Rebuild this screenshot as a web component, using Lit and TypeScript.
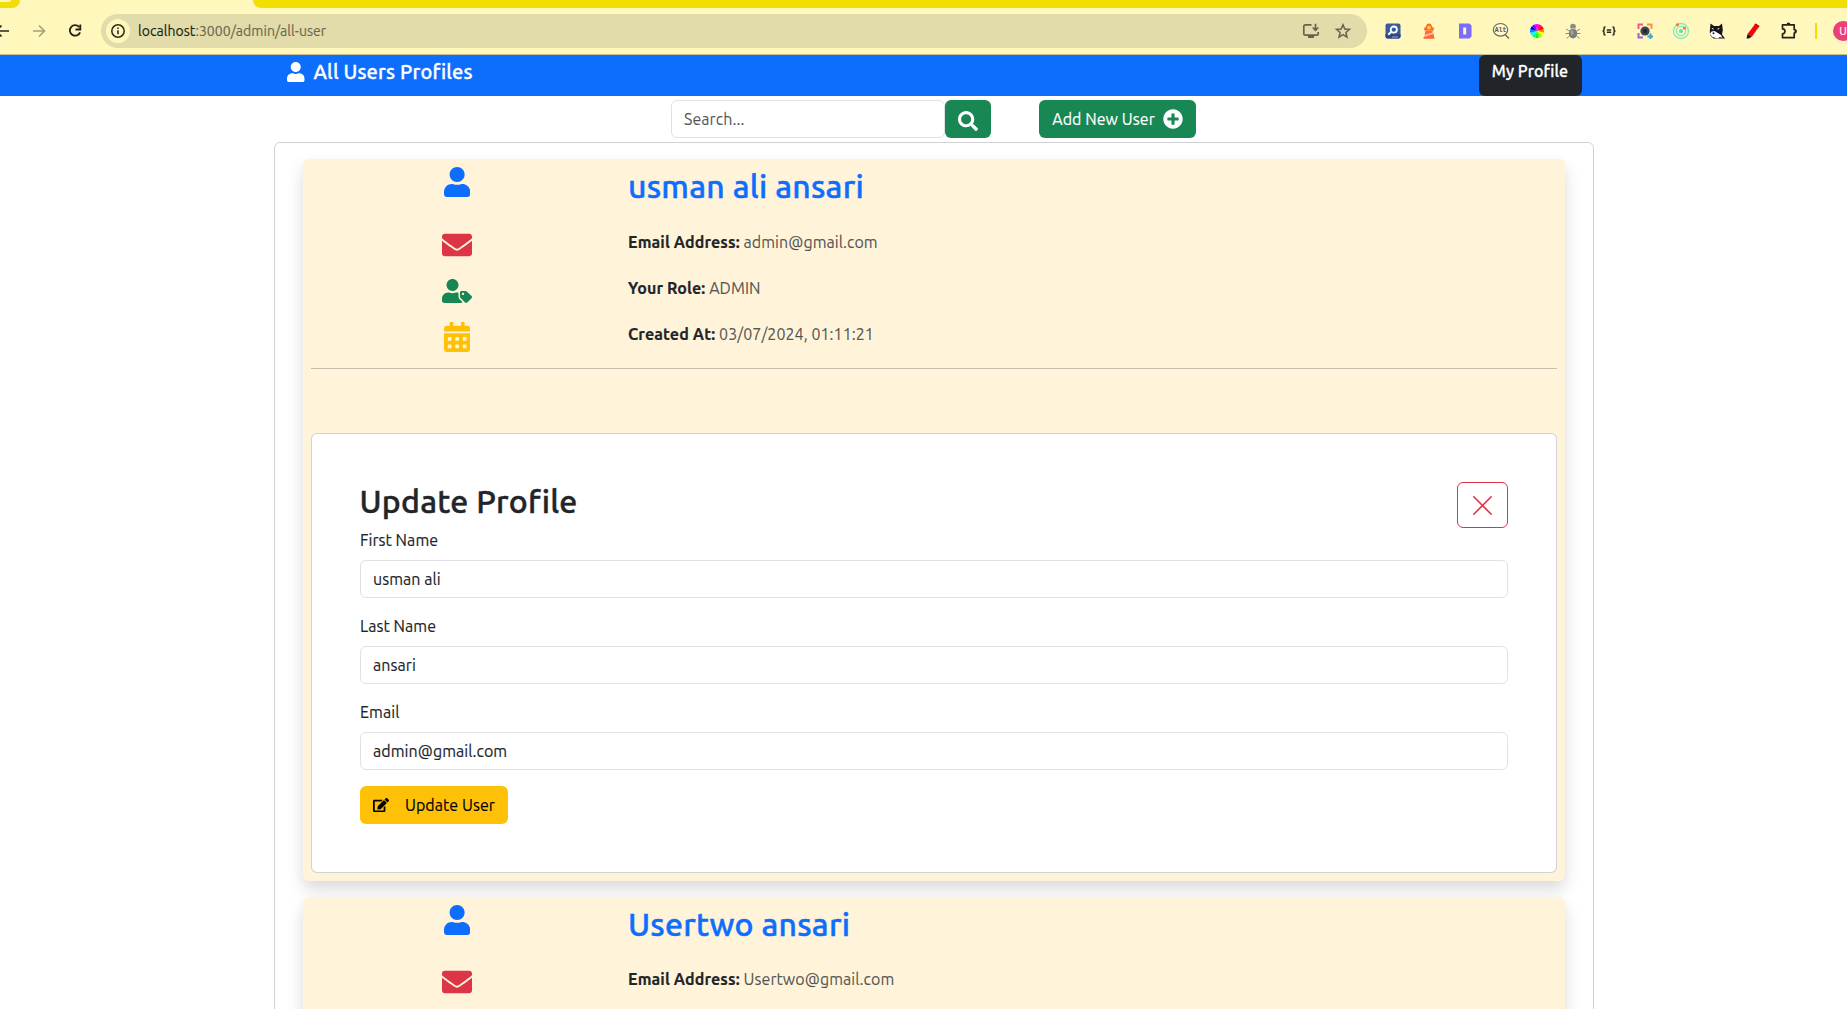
import { LitElement, html, css, svg, nothing } from "lit";
import { customElement, property } from "lit/decorators.js";

const ICONS: Record<string, { w: number; h: number; d: string }> = {
  user: { w: 448, h: 512, d: "M224 256c70.7 0 128-57.3 128-128S294.7 0 224 0 96 57.3 96 128s57.3 128 128 128zm89.6 32h-16.7c-22.2 10.2-46.9 16-72.9 16s-50.6-5.8-72.9-16h-16.7C60.2 288 0 348.2 0 422.4V464c0 26.5 21.5 48 48 48h352c26.5 0 48-21.5 48-48v-41.6c0-74.2-60.2-134.4-134.4-134.4z" },
  envelope: { w: 512, h: 512, d: "M502.3 190.8c3.9-3.1 9.7-.2 9.7 4.7V400c0 26.5-21.5 48-48 48H48c-26.5 0-48-21.5-48-48V195.6c0-5 5.7-7.8 9.7-4.7 22.4 17.4 52.1 39.5 154.1 113.6 21.1 15.4 56.7 47.8 92.2 47.6 35.7.3 72-32.8 92.3-47.6 102-74.1 131.6-96.3 154-113.7zM256 320c23.2.4 56.6-29.2 73.4-41.4 132.7-96.3 142.8-104.7 173.4-128.7 5.8-4.5 9.2-11.5 9.2-18.9v-19c0-26.5-21.5-48-48-48H48c-26.5 0-48 21.5-48 48v19c0 7.4 3.4 14.3 9.2 18.9 30.6 23.9 40.7 32.4 173.4 128.7 16.8 12.2 50.2 41.8 73.4 41.4z" },
  userTag: { w: 640, h: 512, d: "M630.6 364.9l-90.3-90.2c-12-12-28.3-18.7-45.3-18.7h-79.3c-17.7 0-32 14.3-32 32v79.2c0 17 6.7 33.2 18.7 45.2l90.3 90.2c12.5 12.5 32.8 12.5 45.3 0l92.5-92.5c12.6-12.5 12.6-32.7.1-45.2zm-182.8-21c-13.3 0-24-10.7-24-24s10.7-24 24-24 24 10.7 24 24c0 13.2-10.7 24-24 24zm-223.8-88c70.7 0 128-57.3 128-128C352 57.3 294.7 0 224 0S96 57.3 96 128c0 70.6 57.3 127.9 128 127.9zm127.8 111.2V294c-12.2-3.6-24.9-6.2-38.2-6.2h-16.7c-22.2 10.2-46.9 16-72.9 16s-50.6-5.8-72.9-16h-16.7C60.2 287.9 0 348.1 0 422.3v41.6c0 26.5 21.5 48 48 48h352c15.5 0 29.1-7.5 37.9-18.9l-58-58c-18.1-18.1-28.1-42.2-28.1-67.9z" },
  calendar: { w: 448, h: 512, d: "M0 464c0 26.5 21.5 48 48 48h352c26.5 0 48-21.5 48-48V192H0v272zm320-196c0-6.6 5.4-12 12-12h40c6.6 0 12 5.4 12 12v40c0 6.6-5.4 12-12 12h-40c-6.6 0-12-5.4-12-12v-40zm0 128c0-6.6 5.4-12 12-12h40c6.6 0 12 5.4 12 12v40c0 6.6-5.4 12-12 12h-40c-6.6 0-12-5.4-12-12v-40zM192 268c0-6.6 5.4-12 12-12h40c6.6 0 12 5.4 12 12v40c0 6.6-5.4 12-12 12h-40c-6.6 0-12-5.4-12-12v-40zm0 128c0-6.6 5.4-12 12-12h40c6.6 0 12 5.4 12 12v40c0 6.6-5.4 12-12 12h-40c-6.6 0-12-5.4-12-12v-40zM64 268c0-6.6 5.4-12 12-12h40c6.6 0 12 5.4 12 12v40c0 6.6-5.4 12-12 12H76c-6.6 0-12-5.4-12-12v-40zm0 128c0-6.6 5.4-12 12-12h40c6.6 0 12 5.4 12 12v40c0 6.6-5.4 12-12 12H76c-6.6 0-12-5.4-12-12v-40zM400 64h-48V16c0-8.8-7.2-16-16-16h-32c-8.8 0-16 7.2-16 16v48H160V16c0-8.8-7.2-16-16-16h-32c-8.8 0-16 7.2-16 16v48H48C21.5 64 0 85.5 0 112v48h448v-48c0-26.5-21.5-48-48-48z" },
  plus: { w: 512, h: 512, d: "M256 8C119 8 8 119 8 256s111 248 248 248 248-111 248-248S393 8 256 8zm144 276c0 6.6-5.4 12-12 12h-92v92c0 6.6-5.4 12-12 12h-56c-6.6 0-12-5.4-12-12v-92h-92c-6.6 0-12-5.4-12-12v-56c0-6.6 5.4-12 12-12h92v-92c0-6.6 5.4-12 12-12h56c6.6 0 12 5.4 12 12v92h92c6.6 0 12 5.4 12 12v56z" },
  search: { w: 512, h: 512, d: "M505 442.7L405.3 343c-4.5-4.5-10.6-7-17-7H372c27.6-35.3 44-79.7 44-128C416 93.1 322.9 0 208 0S0 93.1 0 208s93.1 208 208 208c48.3 0 92.7-16.4 128-44v16.3c0 6.4 2.5 12.5 7 17l99.7 99.7c9.4 9.4 24.6 9.4 33.9 0l28.3-28.3c9.4-9.4 9.4-24.6.1-34zM208 336c-70.7 0-128-57.2-128-128 0-70.7 57.2-128 128-128 70.7 0 128 57.2 128 128 0 70.7-57.2 128-128 128z" },
  edit: { w: 576, h: 512, d: "M402.6 83.2l90.2 90.2c3.8 3.8 3.8 10 0 13.8L274.4 405.6l-92.8 10.3c-12.4 1.4-22.9-9.1-21.5-21.5l10.3-92.8L388.8 83.2c3.8-3.8 10-3.8 13.8 0zm162-22.9l-48.8-48.8c-15.2-15.2-39.9-15.2-55.2 0l-35.4 35.4c-3.8 3.8-3.8 10 0 13.8l90.2 90.2c3.8 3.8 10 3.8 13.8 0l35.4-35.4c15.2-15.3 15.2-40 0-55.2zM384 346.2V448H64V128h229.8c3.2 0 6.2-1.3 8.5-3.5l40-40c7.6-7.6 2.2-20.5-8.5-20.5H48C21.5 64 0 85.5 0 112v352c0 26.5 21.5 48 48 48h352c26.5 0 48-21.5 48-48V306.2c0-10.7-12.9-16-20.5-8.5l-40 40c-2.2 2.3-3.5 5.3-3.5 8.5z" },
};

const icon = (name: string, w: number, h: number) => {
  const i = ICONS[name];
  return html`<svg width=${w} height=${h} viewBox="0 0 ${i.w} ${i.h}" fill="currentColor"><path d=${i.d}></path></svg>`;
};

const sector = (k: number) => {
  const a = ((k * 30 - 105) * Math.PI) / 180;
  const b = ((k * 30 - 75) * Math.PI) / 180;
  const p = (t: number) => `${(8 + 7 * Math.cos(t)).toFixed(2)} ${(8 + 7 * Math.sin(t)).toFixed(2)}`;
  return svg`<path d="M8 8L${p(a)}A7 7 0 0 1 ${p(b)}z" fill="hsl(${300 + k * 30} 100% 50%)"></path>`;
};

const EXTENSIONS = [
  svg`<rect x=".5" y=".5" width="15" height="15" rx="2" fill="#3a5a9e"></rect><path d="M.5 11h15v2.5a2 2 0 0 1-2 2h-11a2 2 0 0 1-2-2z" fill="#2d4682"></path><circle cx="8.8" cy="6.6" r="3.1" fill="none" stroke="#fff" stroke-width="1.8"></circle><path d="M6.4 8.8L3.2 11.8" stroke="#fff" stroke-width="2"></path><path d="M7 14h6" stroke="#8fa6d6"></path>`,
  svg`<path d="M4.6 4.5C5 2 6.400.4 8 .4S11 2 11.400 4.500h1.400v3H3.200v-3z" fill="#ff6633"></path><circle cx="8" cy="4.600" r="1.900" fill="#ffd21e"></circle><path d="M4.500 7.500h7l.400 2L3.500 12z" fill="#ff6a3c"></path><path d="M3.500 12l8.600-2.800.4 2.400L2.600 15z" fill="#ffb59b"></path><path d="M2.400 15.800l.3-1.600 9.900-3.200.9 4.800z" fill="#ff6633"></path>`,
  svg`<path fill-rule="evenodd" d="M2 .5h10.500l2 2v11l-2 2H2zM6.200 4.500v7h3v-7z" fill="#7a6cff"></path>`,
  svg`<ellipse cx="7.500" cy="6.800" rx="7.200" ry="6.300" fill="#fdf8d2" stroke="#6b6950" stroke-width="1.200"></ellipse><path d="M12 11.500l4 4" stroke="#6b6950" stroke-width="1.500"></path><text x="7.500" y="9.200" text-anchor="middle" font-family="Liberation Mono, monospace" font-size="6.500" font-weight="700" fill="#55533e">Alt</text>`,
  svg`${Array.from({ length: 12 }, (_, k) => sector(k))}`,
  svg`<g fill="none" stroke="#8b8b80" stroke-width="1"><path d="M4.500 8L1 6M4 10.500H.5M4.500 13L1.500 15.500M11.500 8L15 6M12 10.500h3.500M11.500 13l3 2.500"></path></g><ellipse cx="8" cy="10.500" rx="4.200" ry="5" fill="#7c7c78"></ellipse><circle cx="8" cy="3.600" r="2.800" fill="#8a8a86"></circle><path d="M5.500 5.700h5" stroke="#c8c6a8"></path><ellipse cx="7" cy="9.500" rx="1.500" ry="2.500" fill="#a3a3a0"></ellipse>`,
  svg`<g fill="none" stroke="#2a2a22" stroke-width="1.500"><path d="M4.500 4H4Q3 4 3 5v1.700Q3 8 1.500 8 3 8 3 9.300V11q0 1 1 1h.5M11.500 4h.5q1 0 1 1v1.700Q13 8 14.500 8 13 8 13 9.300V11q0 1-1 1h-.5"></path><path d="M5.800 7h4.400M5.800 9.300h4.400"></path></g>`,
  svg`<g fill="none" stroke-width="2"><path d="M1.500 6V1.500H6" stroke="#f0568a"></path><path d="M10 1.500h4.500V6" stroke="#f79342"></path><path d="M1.500 10v4.500H6" stroke="#9b62d6"></path><path d="M13.500 10.500v5.500M10.500 13.500h5.500" stroke="#38a7d0"></path></g><circle cx="8" cy="8" r="4.600" fill="#3c4654"></circle><circle cx="8" cy="8" r="2" fill="#1d2530"></circle>`,
  svg`<g fill="none" stroke="#7fecc0" stroke-width="1.300"><circle cx="8" cy="8" r="7.500"></circle><circle cx="8" cy="8" r="4.700"></circle></g><circle cx="8" cy="8" r="2" fill="#5fe0b4"></circle><circle cx="4.500" cy="1.700" r="1.500" fill="#ff6a3d"></circle><circle cx="11.500" cy="5" r="1.600" fill="#ff6a3d"></circle>`,
  svg`<path d="M1.500.5L5 3h5l3-2.500.8 6.500-.8 4.500 3 4H4.500L1 12 .8 8z" fill="#15151a"></path><path d="M5.500 8L2.500 8.500.8 11l2.700 3 5 1.500 2.500-1.500 2.500 1-1.500-3-4-2.500z" fill="#fff"></path><path d="M2.800 5.500l1.700.6M8.500 6.200l1.800-.8" stroke="#fff"></path><circle cx="4.500" cy="10.300" r="1" fill="#222"></circle>`,
  svg`<path d="M10.500.5l4 2.500L7 13.500 2.500 11z" fill="#f00808"></path><path d="M10.500.5l4 2.500-1.200 1.600-4-2.600z" fill="#e00000"></path><path d="M2.500 11L7 13.500 4 15.500H1.500z" fill="#30130a"></path>`,
  svg`<path d="M1.500 1.800h11.700v4.700a1.800 1.800 0 0 1 0 3.600v4.600H1.500v-3.900a2.500 2.500 0 0 0 0-5z" fill="none" stroke="#23231b" stroke-width="1.700" stroke-linejoin="round"></path><path d="M5.500 1.500a1.900 1.900 0 0 1 3.800 0zM13.500 6.400a1.900 1.900 0 0 1 0 3.800z" fill="#23231b"></path>`,
];

@customElement("browser-bar")
class BrowserBar extends LitElement {
  static styles = css`
    :host { display: block; height: 55px; box-sizing: border-box; overflow: hidden; background: #fff7bb; border-bottom: 1px solid #c6c194; font-family: Ubuntu, "Noto Sans", sans-serif; }
    svg { display: block; flex: none; overflow: visible; }
    .tabs { display: flex; justify-content: space-between; height: 8px; }
    .tab-left { width: 20px; background: #f2de00; border-bottom-right-radius: 8px; }
    .tab-pill { width: 11px; height: 2px; background: #fff7bb; border-bottom-right-radius: 6px; }
    .tab-right { width: 1594px; background: #f2de00; border-bottom-left-radius: 8px; }
    .bar { display: flex; align-items: center; height: 46px; }
    .nav { display: flex; flex: none; align-items: center; gap: 19px; width: 101px; }
    .back { margin-left: -7px; }
    .omnibox { display: flex; flex: none; align-items: center; box-sizing: border-box; width: 1266px; height: 34px; padding: 0 16px 0 5px; border-radius: 17px; background: #e1dca9; }
    .info { display: flex; align-items: center; justify-content: center; width: 24px; height: 24px; margin-right: 8px; border-radius: 50%; background: #fff7bb; }
    .url { flex: 1; font-size: 14px; line-height: 20px; letter-spacing: 0.05px; color: #6a6751; white-space: nowrap; }
    .host { color: #1f1f1a; }
    .actions { display: flex; gap: 16px; }
    .extensions { display: flex; flex: none; gap: 20px; margin-left: 18px; }
    .divider { flex: none; width: 2px; height: 16px; margin-left: 18px; background: #f2de00; }
    .avatar { flex: none; width: 20px; height: 20px; margin-left: 16px; border-radius: 50%; background: #ec407a; color: #fff; font-size: 11px; line-height: 20px; text-align: center; }
  `;
  render() {
    return html`
      <div class="tabs"><div class="tab-left"><div class="tab-pill"></div></div><div class="tab-right"></div></div>
      <div class="bar">
        <div class="nav">
          <svg class="back" width="16" height="16" viewBox="0 0 16 16" fill="none" stroke="#2a2a22" stroke-width="1.700"><path d="M16 8H3M8.500 2.500L3 8l5.500 5.500"></path></svg>
          <svg width="20" height="16" viewBox="0 0 20 16" fill="none" stroke="#a5a07a" stroke-width="1.600"><path d="M5 8h11M11 2.500L16.500 8 11 13.500"></path></svg>
          <svg width="16" height="16" viewBox="0 0 16 16" fill="none" stroke="#23231b" stroke-width="1.800"><path d="M12.400 4.200A5.300 5.300 0 1 0 13.100 9.300"></path><path d="M13.300 1.500v5H8.500"></path></svg>
        </div>
        <div class="omnibox">
          <div class="info"><svg width="16" height="16" viewBox="0 0 16 16"><circle cx="8" cy="8" r="6.200" fill="none" stroke="#2a2a22" stroke-width="1.500"></circle><path d="M8 7.200v4M8 4.500v1.500" stroke="#2a2a22" stroke-width="1.600"></path></svg></div>
          <div class="url"><span class="host">localhost</span>:3000/admin/all-user</div>
          <div class="actions">
            <svg width="16" height="16" viewBox="0 0 16 16" fill="none" stroke="#66634c" stroke-width="1.700"><path d="M8.500 1.800H2.300a1.500 1.500 0 0 0-1.500 1.500v7.400a1.500 1.500 0 0 0 1.500 1.500h11.400a1.500 1.500 0 0 0 1.500-1.500V9M12.500.8v6M9.700 4.500l2.800 2.800 2.800-2.800"></path><path d="M5 14h6" stroke-width="2"></path></svg>
            <svg width="16" height="16" viewBox="0 0 16 16" fill="none" stroke="#66634c" stroke-width="1.500"><path d="M8 1.700l1.800 4.300 4.700.4-3.600 3.100 1.100 4.600L8 11.600l-4 2.500 1.100-4.600-3.600-3.100 4.700-.4z"></path></svg>
          </div>
        </div>
        <div class="extensions">${EXTENSIONS.map((e) => html`<svg width="16" height="16" viewBox="0 0 16 16">${e}</svg>`)}</div>
        <div class="divider"></div>
        <div class="avatar">U</div>
      </div>`;
  }
}

interface User { first: string; last: string; email: string; role?: string; created?: string; }

@customElement("user-card")
class UserCard extends LitElement {
  @property({ attribute: false }) user!: User;
  @property({ type: Boolean }) editing = false;
  static styles = css`
    :host { display: block; box-sizing: border-box; padding: 8px; border-radius: 6px; background: #fff3da; box-shadow: 0 8px 16px rgba(0, 0, 0, 0.15); }
    svg { display: block; }
    h2 { margin: 0; font-size: 32px; line-height: 38.4px; font-weight: 500; letter-spacing: 0.23px; -webkit-text-stroke: 0.45px currentColor; }
    .info { display: grid; grid-template-columns: 292px 1fr; column-gap: 25px; grid-template-rows: 62.600px 46px 46px 46px; }
    .icon { display: flex; justify-content: center; align-items: center; height: 30px; }
    .blue { color: #0d6efd; }
    .red { color: #dc3545; }
    .green { color: #198754; }
    .yellow { color: #ffc107; }
    .line { color: rgba(33, 37, 41, 0.75); }
    b { color: #212529; font-weight: 700; letter-spacing: 0.12px; }
    hr { height: 1px; margin: 0 0 64px; border: 0; background: rgba(33, 37, 41, 0.25); }
    .panel { padding: 48px; border: 1px solid rgba(0, 0, 0, 0.175); border-radius: 6px; background: #fff; }
    .head { display: flex; justify-content: space-between; align-items: flex-start; height: 46px; }
    .head h2 { margin-left: -0.5px; }
    .close { display: flex; align-items: center; justify-content: center; box-sizing: border-box; width: 51px; height: 46px; padding-top: 1px; border: 1px solid #dc3545; border-radius: 6px; }
    label { display: block; margin-bottom: 8px; }
    input { display: block; box-sizing: border-box; width: 100%; height: 38px; margin: 0 0 16px; padding: 6px 12px; border: 1px solid #dee2e6; border-radius: 6px; background: #fff; color: #212529; font: inherit; letter-spacing: inherit; -webkit-text-stroke: inherit; }
    .update { display: flex; align-items: center; box-sizing: border-box; width: 148px; height: 38px; padding: 0 13px; gap: 16px; border-radius: 6px; background: #ffc107; color: #000; white-space: nowrap; }
  `;
  private field(label: string, value: string) {
    return html`<label>${label}</label><input .value=${value} />`;
  }
  render() {
    const u = this.user;
    return html`
      <div class="info">
        <div class="icon blue">${icon("user", 26.25, 30)}</div><h2 class="blue">${u.first} ${u.last}</h2>
        <div class="icon red">${icon("envelope", 30, 30)}</div><div class="line"><b>Email Address:</b> ${u.email}</div>
        ${u.role ? html`<div class="icon green">${icon("userTag", 30, 24)}</div><div class="line"><b>Your Role:</b> ${u.role}</div>` : nothing}
        ${u.created ? html`<div class="icon yellow">${icon("calendar", 26.25, 30)}</div><div class="line"><b>Created At:</b> ${u.created}</div>` : nothing}
      </div>
      <hr />
      ${this.editing
        ? html`<div class="panel">
            <div class="head">
              <h2>Update Profile</h2>
              <div class="close"><svg width="25" height="25" viewBox="0 0 25 25" fill="none" stroke="#dc3545" stroke-width="1.600" stroke-linecap="round"><path d="M3.800 3.800l17.400 17.400M21.200 3.800L3.800 21.200"></path></svg></div>
            </div>
            ${this.field("First Name", u.first)}${this.field("Last Name", u.last)}${this.field("Email", u.email)}
            <div class="update">${icon("edit", 16, 14.2)}<span>Update User</span></div>
          </div>`
        : nothing}`;
  }
}

const USERS: User[] = [
  { first: "usman ali", last: "ansari", email: "admin@gmail.com", role: "ADMIN", created: "03/07/2024, 01:11:21" },
  { first: "Usertwo", last: "ansari", email: "Usertwo@gmail.com" },
];

@customElement("app-root")
class AppRoot extends LitElement {
  static styles = css`
    :host { display: flex; flex-direction: column; height: 1009px; overflow: hidden; background: #fff; color: #212529; font: 400 16px/24px Ubuntu, "Noto Sans", sans-serif; letter-spacing: 0.06px; -webkit-text-stroke: 0.15px currentColor; }
    svg { display: block; flex: none; }
    browser-bar, .navbar, .tools { flex: none; }
    browser-bar { letter-spacing: 0; }
    .navbar { display: flex; justify-content: space-between; box-sizing: border-box; height: 41px; padding: 0 265px 0 287px; background: #0d6efd; color: #fff; font-weight: 500; -webkit-text-stroke: 0.3px currentColor; }
    .title { display: flex; align-items: center; gap: 9px; height: 24px; padding-top: 5px; font-size: 20px; letter-spacing: 0.16px; }
    .title svg { margin-top: -1px; }
    .profile { box-sizing: border-box; width: 103px; height: 41px; padding: 4px 1px 0 0; border-radius: 6px; background: #212529; text-align: center; }
    .tools { display: flex; height: 38px; margin: 4px 0 4px 671px; }
    .search { box-sizing: border-box; width: 274px; height: 38px; padding: 6px 12px; border: 1px solid #dee2e6; border-radius: 6px; background: #fff; font: inherit; letter-spacing: inherit; color: #212529; }
    .search::placeholder { color: rgba(33, 37, 41, 0.75); opacity: 1; }
    .btn { display: flex; align-items: center; justify-content: center; box-sizing: border-box; height: 38px; border-radius: 6px; background: #198754; color: #fff; white-space: nowrap; }
    .find { width: 46px; padding-top: 4px; }
    .add { width: 157px; gap: 8px; margin-left: 48px; }
    .list { display: flex; flex-direction: column; gap: 16px; box-sizing: border-box; flex: none; width: 1320px; margin-left: 274px; padding: 16px 28px; border: 1px solid rgba(0, 0, 0, 0.175); border-radius: 6px; }
  `;
  render() {
    return html`
      <browser-bar></browser-bar>
      <div class="navbar">
        <div class="title">${icon("user", 17.5, 20)}<span>All Users Profiles</span></div>
        <div class="profile">My Profile</div>
      </div>
      <div class="tools">
        <input class="search" placeholder="Search..." />
        <div class="btn find">${icon("search", 20, 20)}</div>
        <div class="btn add"><span>Add New User</span>${icon("plus", 20, 20)}</div>
      </div>
      <div class="list">${USERS.map((u, i) => html`<user-card .user=${u} ?editing=${i === 0}></user-card>`)}</div>`;
  }
}
